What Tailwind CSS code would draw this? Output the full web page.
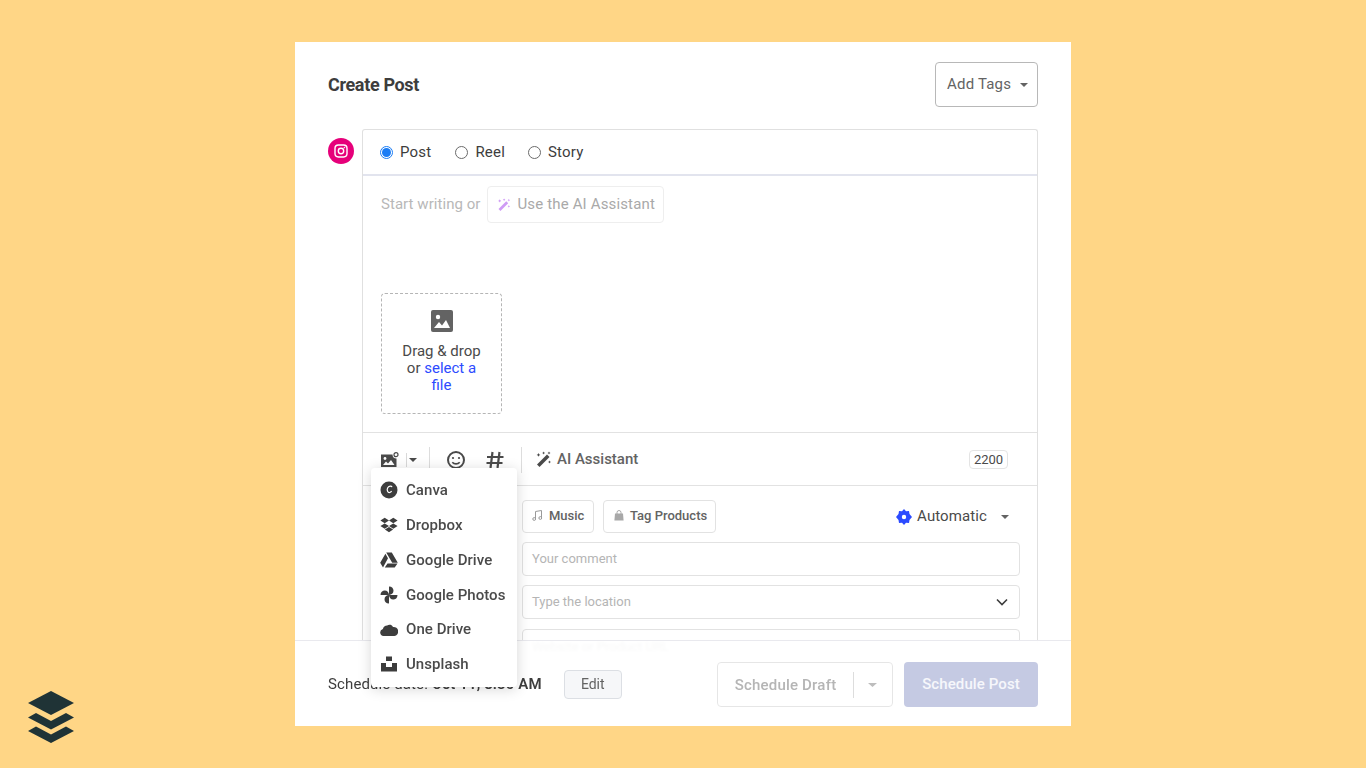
<!DOCTYPE html>
<html lang="en">
<head>
    <meta charset="UTF-8">
    <meta name="viewport" content="width=device-width, initial-scale=1.0">
    <title>Create Post</title>
    <script src="https://cdn.jsdelivr.net/npm/@tailwindcss/browser@4"></script>
</head>
<body class="bg-[#ffd686] h-[768px] overflow-hidden font-['Roboto',sans-serif] text-[#3d3d3d]">
    <div class="pt-[42px] pl-[295px]">
        <!-- card -->
        <div class="relative w-[776px] h-[684px] bg-white overflow-hidden">
            <header class="flex items-start justify-between pt-[20px] pl-[33px] pr-[33px] h-[87px]">
                <h1 class="text-[18px] leading-[45px] font-bold text-[#3d3d3d] tracking-[-0.35px]">Create Post</h1>
                <button class="w-[103px] h-[45px] flex items-center justify-between pl-[11px] pr-[9px] border border-[#b8b8b8] rounded text-[15px] tracking-[0.2px] text-[#636363]">
                    Add Tags
                    <svg width="8" height="4" viewBox="0 0 8 4"><path d="M0 0h8L4 4z" fill="#636363"/></svg>
                </button>
            </header>

            <div class="flex pl-[33px] pr-[33px]">
                <div class="w-[34px] shrink-0 pt-[9px]">
                    <div class="w-[26px] h-[26px] rounded-full bg-[#e6007a] flex items-center justify-center">
                        <svg width="14" height="14" viewBox="0 0 14 14" fill="none" stroke="#fff" stroke-width="1.4"><rect x="1" y="1" width="12" height="12" rx="3.4"/><circle cx="7" cy="7" r="2.7"/><circle cx="10.4" cy="3.6" r=".5" fill="#fff" stroke-width=".5"/></svg>
                    </div>
                </div>

                <!-- composer, runs on under the footer -->
                <div class="w-[676px] h-[530px] border border-b-0 border-[#e0e0e0] rounded-t-[3px]">
                    <div class="h-[46px] flex items-center pl-[17px] border-b-2 border-[#e2e4ee] text-[15px] tracking-[0.2px] text-[#3d3d3d]">
                        <span class="w-[13px] h-[13px] rounded-full border border-[#1a7cf5] flex items-center justify-center"><span class="w-[9px] h-[9px] rounded-full bg-[#1a7cf5]"></span></span>
                        <span class="ml-[7px] mr-[24px] leading-[20px]">Post</span>
                        <span class="w-[13px] h-[13px] rounded-full border border-[#6b6b6b]"></span>
                        <span class="ml-[7px] mr-[23px] leading-[20px]">Reel</span>
                        <span class="w-[13px] h-[13px] rounded-full border border-[#6b6b6b]"></span>
                        <span class="ml-[7px] leading-[20px]">Story</span>
                    </div>

                    <div class="h-[257px] pl-[18px] pt-[10px] border-b border-[#e2e2e2]">
                        <div class="flex items-center h-[37px] text-[15px] tracking-[0.05px] text-[#b8b8b8]">
                            <span>Start writing or</span>
                            <span class="ml-[7px] w-[177px] h-[37px] flex items-center pl-[9px] border border-[#eeeeee] rounded-[4px]">
                                <svg width="14" height="14" viewBox="0 0 13 13" fill="#cf9bf5"><path d="M8.600 3 10.400 4.800 3.200 12 1.400 10.200z"/><path d="M2.500 1.200l.5 1 1 .5-1 .5-.5 1-.5-1-1-.5 1-.5zM6.600.4l.4.8.8.4-.8.4-.4.8-.4-.8-.8-.4.8-.4zM11 6.600l.4.8.8.4-.8.4-.4.8-.4-.8-.8-.4.8-.4zM11 .8l.4.800.800.400-.800.400-.4.800-.4-.800-.800-.400.800-.400z"/></svg>
                                <span class="ml-[6px] text-[#a9a9a9] tracking-[0.15px]">Use the AI Assistant</span>
                            </span>
                        </div>
                        <div class="mt-[70px] w-[121px] h-[121px] border border-dashed border-[#b5b5b5] rounded-[4px] flex flex-col items-center pt-[16px] text-[15px] leading-[17px] text-center text-[#4a4a4a]">
                            <svg width="22" height="22" viewBox="0 0 22 22"><rect width="22" height="22" rx="2" fill="#636363"/><circle cx="7" cy="7" r="2.200" fill="#fff"/><path d="M3 18l5-6 3 3.500 4-5.500 4 8z" fill="#fff"/></svg>
                            <p class="mt-[11px] w-[84px]">Drag &amp; drop or <span class="text-[#2c4bff]">select a file</span></p>
                        </div>
                    </div>

                    <!-- toolbar -->
                    <div class="h-[53px] flex items-center pl-[18px] pr-[29px] pt-[1px] border-b border-[#e2e2e2] text-[#4a4a4a]">
                        <svg width="18" height="16" viewBox="0 0 18 16"><path d="M0 2.500h11.500a4 4 0 0 0 4 4V15H0z" fill="#4a4a4a"/><circle cx="4" cy="6.500" r="1.400" fill="#fff"/><path d="M2 13l3-3.500 2 2 3-3.500 3.500 5z" fill="#fff"/><circle cx="15" cy="2.700" r="2" fill="none" stroke="#4a4a4a" stroke-width="1.200"/></svg>
                        <span class="ml-[7px] w-px h-[14px] bg-[#d9d9d9]"></span>
                        <svg class="ml-[2px]" width="8" height="4" viewBox="0 0 8 4"><path d="M0 0h8L4 4z" fill="#4a4a4a"/></svg>
                        <span class="ml-[12px] w-px h-[26px] bg-[#dddddd]"></span>
                        <svg class="ml-[16px]" width="20" height="20" viewBox="0 0 20 20" fill="none" stroke="#4a4a4a" stroke-width="2"><circle cx="10" cy="10" r="8"/><circle cx="7" cy="8" r="1.100" fill="#4a4a4a" stroke="none"/><circle cx="13" cy="8" r="1.100" fill="#4a4a4a" stroke="none"/><path d="M6.300 12.200c1.800 2.200 5.600 2.200 7.400 0" stroke-width="1.600"/></svg>
                        <svg class="ml-[20px]" width="18" height="18" viewBox="0 0 18 18" fill="none" stroke="#4a4a4a" stroke-width="2.200"><path d="M6.500 1 4.500 17M13.500 1l-2 16M1 6h16.500M.5 12h16"/></svg>
                        <span class="ml-[17px] w-px h-[26px] bg-[#dddddd]"></span>
                        <svg class="ml-[13px]" width="17" height="17" viewBox="0 0 17 17" fill="#4a4a4a"><path d="M12 3.500 14.500 6 4.500 16 2 13.500z"/><path d="M3.500 2l.6 1.300 1.300.6-1.300.6-.6 1.300-.6-1.300-1.300-.6 1.300-.6zM8.600.6l.5 1 1 .5-1 .5-.5 1-.5-1-1-.5 1-.5zM14.500 9.500l.5 1 1 .5-1 .5-.5 1-.5-1-1-.5 1-.5zM14 .6l.5 1 1 .5-1 .5-.5 1-.5-1-1-.5 1-.5z"/></svg>
                        <span class="ml-[5px] text-[15px] font-medium text-[#636363]">AI Assistant</span>
                        <span class="ml-auto w-[39px] h-[19px] flex items-center justify-center border border-[#e4e4e4] rounded-[4px] text-[13px] text-[#4a4a4a]">2200</span>
                    </div>

                    <!-- post options -->
                    <div class="pl-[159px] pr-[17px] pt-[14px]">
                        <div class="flex items-center">
                            <span class="w-[72px] h-[33px] flex items-center pl-[9px] pb-[2px] border border-[#e2e2e2] rounded-[4px] text-[13px] font-medium text-[#636363]">
                                <svg width="11" height="11" viewBox="0 0 11 11" fill="none" stroke="#9a9a9a"><path d="M3.500 9V1.500l6-1V8"/><circle cx="2.200" cy="9" r="1.400"/><circle cx="8.300" cy="8" r="1.400"/></svg>
                                <span class="ml-[6px]">Music</span>
                            </span>
                            <span class="ml-[9px] w-[113px] h-[33px] flex items-center pl-[10px] pb-[2px] border border-[#e2e2e2] rounded-[4px] text-[13px] font-medium text-[#636363]">
                                <svg width="10" height="11" viewBox="0 0 10 11"><path d="M1 3.500h8l.600 7H.4z" fill="#a8a8a8"/><path d="M3 4V2.500a2 2 0 0 1 4 0V4" fill="none" stroke="#a8a8a8"/></svg>
                                <span class="ml-[6px]">Tag Products</span>
                            </span>
                            <span class="ml-auto flex items-center pr-[11px] text-[15px] tracking-[0.1px] text-[#4a4a4a]">
                                <svg width="16" height="16" viewBox="0 0 16 16"><path fill="#2c4bff" fill-rule="evenodd" d="M8 0l2 2.300 3-.3.500 3L16 8l-2.500 3-.5 3-3-.300L8 16l-2-2.300-3 .3-.5-3L0 8l2.500-3 .5-3 3 .3zM8 5.800a2.200 2.200 0 1 0 0 4.400 2.200 2.200 0 0 0 0-4.400z"/></svg>
                                <span class="ml-[5px]">Automatic</span>
                                <svg class="ml-[14px]" width="8" height="4" viewBox="0 0 8 4"><path d="M0 0h8L4 4z" fill="#636363"/></svg>
                            </span>
                        </div>
                        <div class="mt-[9px] h-[34px] flex items-center pl-[9px] border border-[#e2e2e2] rounded-[4px] text-[13px] text-[#b5b5b5]">Your comment</div>
                        <div class="mt-[9px] h-[34px] flex items-center justify-between pl-[9px] pr-[11px] border border-[#e2e2e2] rounded-[4px] text-[13px] text-[#b5b5b5]">
                            Type the location
                            <svg width="12" height="8" viewBox="0 0 12 8" fill="none" stroke="#3d3d3d" stroke-width="1.600"><path d="M1 1.500l5 5 5-5"/></svg>
                        </div>
                        <div class="mt-[10px] h-[35px] flex items-center pl-[9px] border border-[#e2e2e2] rounded-[4px] text-[13px] text-[#b5b5b5]">Website or Product URL</div>
                    </div>
                </div>
            </div>

            <footer class="absolute left-0 right-0 bottom-0 h-[86px] flex items-center pl-[33px] pr-[33px] pt-[2px] bg-white/90 backdrop-blur-[1.500px] border-t border-[#e9e9ee] text-[15px]">
                <span class="text-[#3d3d3d] tracking-[0.13px]">Schedule date: <b class="font-semibold">Oct 11, 8:30 AM</b></span>
                <button class="ml-[22px] w-[58px] h-[29px] border border-[#dcdfe4] bg-[#f6f7f9] rounded-[4px] text-[14px] text-[#636363]">Edit</button>
                <div class="ml-auto w-[176px] h-[45px] flex items-center border border-[#e6e6e6] rounded-[4px] text-[15px] font-medium text-[#b5b5b5] tracking-[0.2px]">
                    <span class="w-[136px] h-[26px] leading-[26px] text-center border-r border-[#dddddd]">Schedule Draft</span>
                    <svg class="ml-[14px]" width="9" height="4" viewBox="0 0 9 4"><path d="M0 0h9L4.500 4z" fill="#bdbdbd"/></svg>
                </div>
                <button class="ml-[11px] w-[134px] h-[45px] rounded-[4px] bg-[#c5cae3] text-white/85 text-[15px] font-medium tracking-[0.1px]">Schedule Post</button>
            </footer>

            <!-- menu -->
            <div class="absolute left-[76px] top-[426px] w-[146px] h-[219px] bg-white rounded-[4px] shadow-[0_2px_14px_rgba(0,0,0,0.16)] pt-[5px] pl-[9px] text-[15px] font-medium tracking-[0.05px] text-[#4a4a4a]">
                <div class="h-[34.800px] flex items-center gap-[8px]">
                    <svg width="18" height="18" viewBox="0 0 18 18"><circle cx="9" cy="9" r="8.500" fill="#3d3d3d"/><path d="M12 6.200c-.4-1.400-3.300-1.600-4.400.8s.3 5 2.100 4.500c.9-.2 1.500-.8 1.900-1.500" fill="none" stroke="#fff" stroke-width="1.200"/></svg>
                    <span>Canva</span>
                </div>
                <div class="h-[34.800px] flex items-center gap-[8px]">
                    <svg width="18" height="16" viewBox="0 0 18 16" fill="#3d3d3d"><path d="M4.700.800 9 3.500 4.700 6.200.4 3.500zM13.300.800 17.600 3.500 13.300 6.200 9 3.500zM4.700 6.400 9 9.100 4.700 11.800.4 9.100zM13.300 6.400l4.300 2.700-4.300 2.700L9 9.100zM4.900 12.400 9 10l4.100 2.400L9 15.200z"/></svg>
                    <span>Dropbox</span>
                </div>
                <div class="h-[34.800px] flex items-center gap-[8px]">
                    <svg width="18" height="16" viewBox="0 0 18 16" fill="#3d3d3d"><path d="M6.200.5h5.600l6 10.200h-5.600zM5.400 1.700 8 6.300 3 15.500.2 10.700zM7.500 11.500h10l-2.800 4H4.800z"/></svg>
                    <span>Google Drive</span>
                </div>
                <div class="h-[34.800px] flex items-center gap-[8px]">
                    <svg width="18" height="18" viewBox="0 0 18 18" fill="#3d3d3d"><path d="M9 9V.5c3 0 4.500 2 4.500 4.300S11.500 9 9 9zM9 9h8.500c0 3-2 4.500-4.300 4.500S9 11.500 9 9zM9 9v8.500c-3 0-4.500-2-4.500-4.300S6.500 9 9 9zM9 9H.5c0-3 2-4.500 4.300-4.500S9 6.500 9 9z"/></svg>
                    <span>Google Photos</span>
                </div>
                <div class="h-[34.800px] flex items-center gap-[8px]">
                    <svg width="18" height="12" viewBox="0 0 18 12" fill="#3d3d3d"><path d="M3.500 12a3.500 3.500 0 0 1-.6-6.900A4.500 4.500 0 0 1 7.200 1.500c1.200-1 4.500-1.500 5.800 1.500a4.500 4.500 0 0 1 1.400 9z"/></svg>
                    <span>One Drive</span>
                </div>
                <div class="h-[34.800px] flex items-center gap-[8px]">
                    <svg width="18" height="16" viewBox="0 0 18 16" fill="#3d3d3d"><path d="M6 .5h6v4.500H6zM1 7h5v4h6V7h5v8.500H1z"/></svg>
                    <span>Unsplash</span>
                </div>
            </div>
        </div>
    </div>

    <!-- logo -->
    <svg class="absolute left-[28px] top-[691px]" width="46" height="52" viewBox="0 0 46 52" fill="#1f3336">
        <path d="M23 0 46 12 23 24 0 12z"/>
        <path d="M8 22 23 30 38 22 46 26.500 23 38.500 0 26.500z"/>
        <path d="M8 35.500 23 43.500 38 35.500 46 40 23 52 0 40z"/>
    </svg>
</body>
</html>
